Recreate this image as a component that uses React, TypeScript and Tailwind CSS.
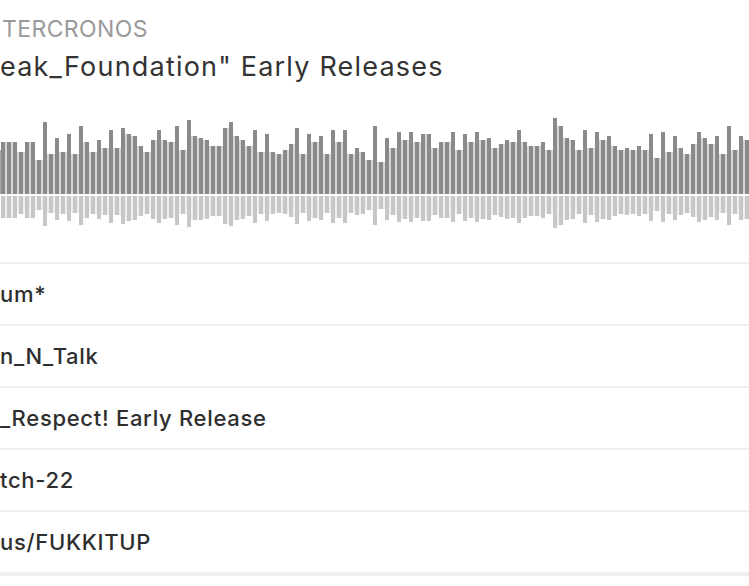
import React from "react";

const H = [
  52, 52, 52, 42, 52, 52, 34, 72, 40, 56, 42, 60, 40, 68, 52, 42, 54, 46, 64, 46, 66, 60, 58, 48, 42, 54, 64, 54, 52, 68, 44, 74, 58, 56, 54, 48, 48, 66, 72, 58, 54, 48,
  64, 42, 60, 42, 40, 44, 50, 66, 40, 60, 52, 58, 40, 64, 52, 64, 40, 46, 42, 34, 68, 32, 56, 46, 62, 54, 62, 52, 60, 60, 46, 52, 52, 62, 44, 60, 52, 62, 54, 56, 46,
  50, 54, 52, 64, 52, 48, 48, 52, 44, 76, 68, 56, 54, 44, 64, 46, 62, 54, 58, 48, 44, 46, 44, 48, 44, 60, 36, 62, 42, 58, 46, 40, 50, 62, 56, 50, 58, 40, 68, 44, 58, 54,
];

function Waveform() {
  const base = 76;
  const low = 78;
  const r = 0.42;
  return (
    <svg width={749} height={112} viewBox="0 0 749 112" className="block">
      <rect x={0} y={base - 44} width={1} height={44} fill="#a8a8a8" />
      {H.map((h, i) => {
        const x = 6 * i + 1;
        const next = H[i + 1];
        const els = [
          <rect key={"t" + i} x={x} y={base - h} width={4} height={h} fill="#8a8a8a" />,
          <rect key={"b" + i} x={x} y={low} width={4} height={Math.round(h * r)} fill="#c7c7c7" />,
        ];
        if (next !== undefined) {
          const m = Math.min(h, next);
          els.push(<rect key={"g" + i} x={x + 4} y={base - m} width={2} height={m} fill="#d6d6d6" />);
          els.push(<rect key={"h" + i} x={x + 4} y={low} width={2} height={Math.round(m * r)} fill="#efefef" />);
        }
        return els;
      })}
    </svg>
  );
}

const tracks = ["um*", "n_N_Talk", "_Respect! Early Release", "tch-22", "us/FUKKITUP"];

export default function App() {
  return (
    <div className="w-[749px] h-[586px] overflow-hidden bg-white font-['Inter',sans-serif]">
      <div className="pt-[15px] pl-[2px] text-[23px] leading-[28px] text-[#9a9a9a] tracking-[0.4px]">TERCRONOS</div>
      <div className="mt-[8px] text-[27px] leading-[32px] text-[#333333] tracking-[1.2px]">eak_Foundation" Early Releases</div>
      <div className="mt-[35px]">
        <Waveform />
      </div>
      <div className="mt-[32px]">
        {tracks.map((t) => (
          <div key={t} className="border-t-2 border-[#efefef] h-[62px] flex items-center text-[22px] font-medium text-[#2e2e2e] tracking-[0.7px]">
            {t}
          </div>
        ))}
        <div className="h-[4px] bg-[#f0f0f0]" />
      </div>
    </div>
  );
}
